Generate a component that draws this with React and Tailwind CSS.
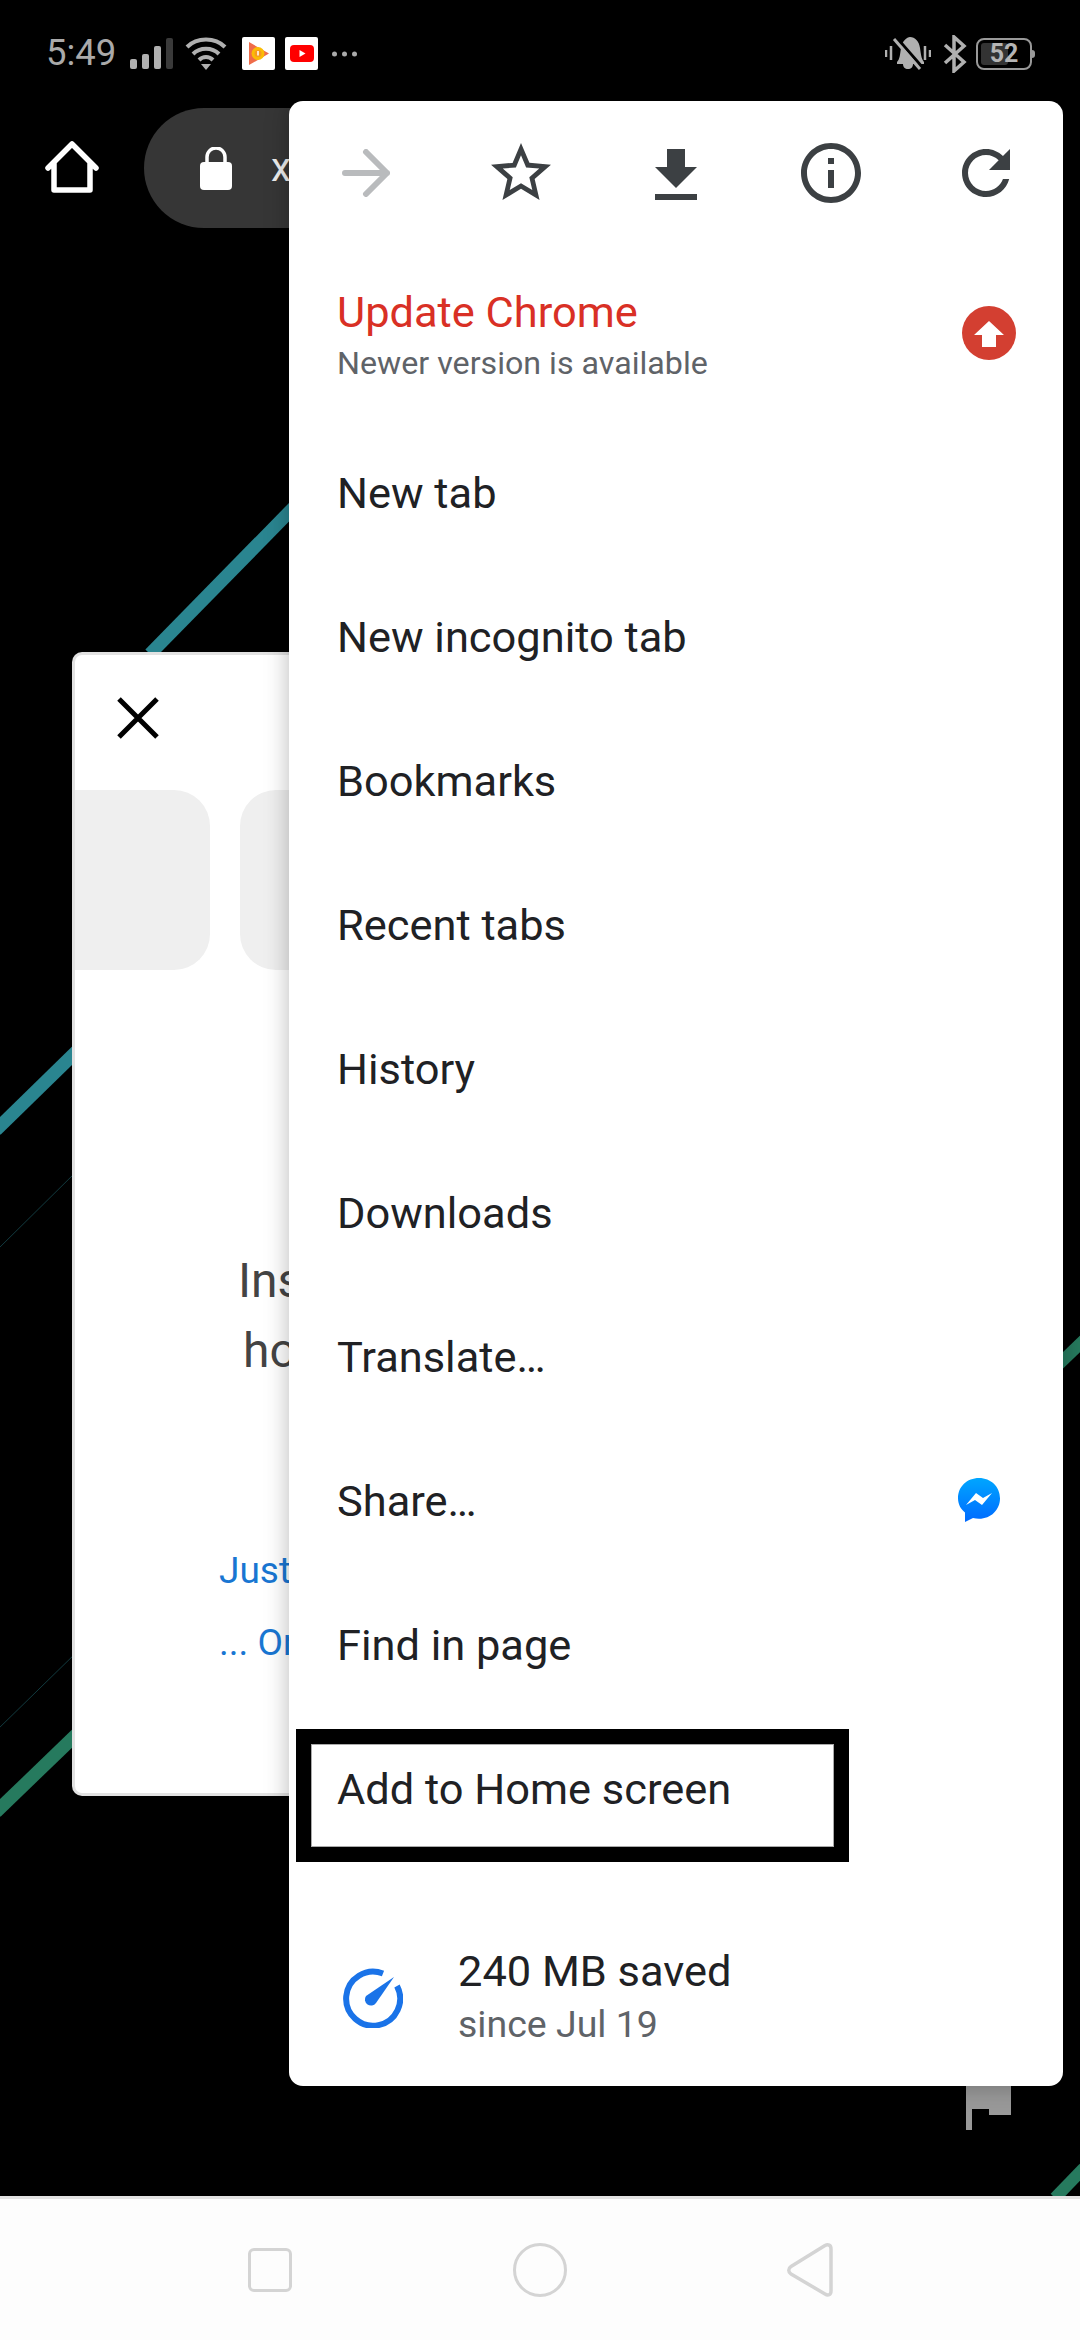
const menuItems = ['New tab', 'New incognito tab', 'Bookmarks', 'Recent tabs', 'History', 'Downloads', 'Translate…']

const ToolbarIcon = ({ d, className = 'fill-[#3c4043]' }) => (
  <div className="flex items-center justify-center">
    <svg viewBox="0 0 24 24" className={`h-[72px] w-[72px] ${className}`}>
      <path d={d} />
    </svg>
  </div>
)

const MenuRow = ({ label, children }) => (
  <div className="relative flex h-[144px] items-center justify-between pl-[48px]">
    <span className="pt-[3px] text-[43.4px] text-[#202124]">{label}</span>
    {children}
  </div>
)

const StatusBar = () => (
  <div className="flex h-[107px] items-center justify-between pr-[45px] pl-[46px] text-[#aaaaaa]">
    <div className="flex items-center">
      <span className="text-[36.5px] leading-none">5:49</span>
      <svg width="43" height="31" viewBox="0 0 43 31" className="ml-[14px]">
        <rect x="0" y="21" width="7" height="10" rx="2" fill="#b0b0b0" />
        <rect x="12" y="16" width="7" height="15" rx="2" fill="#b0b0b0" />
        <rect x="24" y="8" width="7" height="23" rx="2" fill="#b0b0b0" />
        <rect x="36" y="0" width="7" height="31" rx="2" fill="#3a3a3a" />
      </svg>
      <svg width="42" height="33" viewBox="0 0 42 33" className="ml-[12px]" fill="none" stroke="#b0b0b0" strokeWidth="4">
        <path d="M2 10C12 0 30 0 40 10" />
        <path d="M8 17C15 10 27 10 34 17" />
        <path d="M14 23C18 19 24 19 28 23" />
        <path d="M16 27h10l-5 6z" fill="#b0b0b0" stroke="none" />
      </svg>
      <div className="ml-[15px] flex h-[33px] w-[33px] items-center justify-center rounded-[2px] bg-white">
        <svg width="20" height="23" viewBox="0 0 20 23">
          <path d="M0 0L20 11.5 0 23z" fill="#ef6c4a" />
          <circle cx="9" cy="11.5" r="6.5" fill="#fbbc05" />
          <circle cx="9" cy="11.5" r="3.5" fill="#f79a1e" />
          <path d="M9 9v4.500" stroke="#fff" strokeWidth="1.500" />
        </svg>
      </div>
      <div className="ml-[10px] flex h-[33px] w-[33px] items-center justify-center rounded-[2px] bg-white">
        <svg width="24" height="17" viewBox="0 0 24 17">
          <rect width="24" height="17" rx="4" fill="#ff0000" />
          <path d="M9.5 5l6 3.5-6 3.500z" fill="#fff" />
        </svg>
      </div>
      <svg width="25" height="6" viewBox="0 0 25 6" className="ml-[14px]" fill="#aaaaaa">
        <circle cx="2.5" cy="3" r="2.5" />
        <circle cx="12.5" cy="3" r="2.5" />
        <circle cx="22.5" cy="3" r="2.5" />
      </svg>
    </div>
    <div className="flex items-center">
      <svg width="46" height="35" viewBox="0 0 46 35">
        <path d="M12 26c3-3 3-8 4-14 1-7 6-11 9-11 5 0 9 4 10 11 1 6 1 10 4 14v2H28c0 3-2 5-5 5s-5-2-5-5h-6z" fill="#b0b0b0" />
        <path d="M11 1l27 31" stroke="#000" strokeWidth="3" />
        <path d="M9 3l26 30" stroke="#b0b0b0" strokeWidth="3" />
        <path d="M1 14v7M6 10v14M40 10v14M45 14v7" stroke="#b0b0b0" strokeWidth="2.5" />
      </svg>
      <svg width="24" height="38" viewBox="0 0 24 38" className="ml-[12px]" fill="none" stroke="#b0b0b0" strokeWidth="3.5">
        <path d="M2 10L21 27 11 36V2l10 9L2 28" />
      </svg>
      <div className="ml-[9px] flex items-center">
        <div className="relative flex h-[32px] w-[56px] items-center justify-center rounded-[8px] border-[2.5px] border-[#999999] pb-px">
          <div className="absolute top-[3px] bottom-[3px] left-[3px] w-[27px] rounded-[3px] bg-[#333333]" />
          <span className="relative text-[25px] leading-none font-bold text-[#b4b4b4]">52</span>
        </div>
        <div className="h-[8px] w-[3px] rounded-r-full bg-[#999999]" />
      </div>
    </div>
  </div>
)

const Toolbar = () => (
  <div className="flex h-[122px] items-center pl-[45px]">
    <svg width="54" height="54" viewBox="0 0 54 54" fill="none" stroke="#fff" strokeWidth="5.5" strokeLinejoin="round" strokeLinecap="round">
      <path d="M3 27L27 3l24 24M9 22v27h36V22" />
    </svg>
    <div className="ml-[45px] flex h-[120px] w-[400px] items-center rounded-l-full bg-[#363636] pl-[56px]">
      <svg width="32" height="43" viewBox="0 0 32 43" fill="#fff">
        <path d="M7 17v-7a9 9 0 0 1 18 0v7" fill="none" stroke="#fff" strokeWidth="3.5" />
        <rect x="0" y="15" width="32" height="28" rx="4" />
      </svg>
      <span className="ml-[39px] text-[40px] text-[#eeeeee]">x</span>
    </div>
  </div>
)

const ModalBehind = () => (
  <div className="mt-[423px] ml-[72px] flex h-[1144px] w-[300px] flex-col overflow-hidden rounded-[10px] border-y-[3px] border-l-[3px] border-[#e2e2e2] bg-white">
    <svg width="42" height="42" viewBox="0 0 42 42" className="mt-[42px] ml-[42px] shrink-0" stroke="#000" strokeWidth="5">
      <path d="M2 2l38 38M40 2L2 40" />
    </svg>
    <div className="mt-[51px] -ml-[40px] flex h-[180px] shrink-0 gap-[30px]">
      <div className="w-[175px] shrink-0 rounded-[36px] bg-[#efefef]" />
      <div className="w-[200px] shrink-0 rounded-[36px] bg-[#efefef]" />
    </div>
    <div className="mt-[276px] pl-[163px] text-[48px] leading-[70px] text-[#444444]">
      <div>Ins</div>
      <div className="pl-[5px]">ho</div>
    </div>
    <div className="mt-[149px] pl-[144px] text-[37px] leading-[72px] text-[#1976d2]">
      <div>Just</div>
      <div>... Or</div>
    </div>
  </div>
)

const Menu = () => (
  <div className="absolute top-[101px] left-[289px] flex h-[1985px] w-[774px] flex-col rounded-[14px] bg-white shadow-[0_0_24px_rgba(0,0,0,0.28)]">
    <div className="grid h-[144px] grid-cols-5 items-center">
      <div className="flex items-center justify-center">
        <svg width="48" height="48" viewBox="0 0 48 48" fill="none" stroke="#b9bbbd" strokeWidth="6" strokeLinecap="round" strokeLinejoin="round">
          <path d="M3 24h42M24 3l21 21-21 21" />
        </svg>
      </div>
      <ToolbarIcon d="M22 9.24l-7.19-.62L12 2 9.19 8.63 2 9.24l5.46 4.73L5.82 21 12 17.27 18.18 21l-1.63-7.03L22 9.24zM12 15.4l-3.76 2.27 1-4.28-3.32-2.88 4.38-.38L12 6.1l1.71 4.04 4.38.38-3.32 2.88 1 4.28L12 15.4z" />
      <ToolbarIcon className="translate-y-[3px] fill-[#3c4043]" d="M19 9h-4V3H9v6H5l7 7 7-7zM5 18v2h14v-2H5z" />
      <ToolbarIcon d="M11 7h2v2h-2zm0 4h2v6h-2zm1-9C6.48 2 2 6.48 2 12s4.48 10 10 10 10-4.48 10-10S17.52 2 12 2zm0 18c-4.41 0-8-3.59-8-8s3.59-8 8-8 8 3.59 8 8-3.59 8-8 8z" />
      <ToolbarIcon d="M17.65 6.35C16.2 4.9 14.21 4 12 4c-4.42 0-7.99 3.58-7.99 8s3.57 8 7.99 8c3.73 0 6.84-2.55 7.73-6h-2.08c-.82 2.33-3.04 4-5.65 4-3.31 0-6-2.69-6-6s2.69-6 6-6c1.66 0 3.14.69 4.22 1.78L13 11h7V4l-2.35 2.35z" />
    </div>
    <div className="flex h-[175px] items-center justify-between pr-[47px] pl-[48px]">
      <div className="flex flex-col pt-[10px]">
        <span className="text-[43.4px] leading-[50px] text-[#d93025]">Update Chrome</span>
        <span className="text-[32.2px] leading-[50px] text-[#5f6368]">Newer version is available</span>
      </div>
      <svg width="54" height="54" viewBox="0 0 54 54">
        <circle cx="27" cy="27" r="27" fill="#d33f31" />
        <path d="M27 15l15 14H34v12H20V29h-8z" fill="#fff" />
      </svg>
    </div>
    {menuItems.map((item) => (
      <MenuRow key={item} label={item} />
    ))}
    <MenuRow label="Share…">
      <svg width="42" height="44" viewBox="0 0 42 44" className="mr-[63px]">
        <defs>
          <linearGradient id="messenger" x1="0" y1="0" x2="0" y2="1">
            <stop offset="0" stopColor="#00a6ff" />
            <stop offset="1" stopColor="#006aff" />
          </linearGradient>
        </defs>
        <path d="M21 0C9 0 0 8.700 0 20c0 6 2.500 11 7 14.500V44l8-4c2 .5 4 .8 6 .8 12 0 21-9 21-20.500S33 0 21 0z" fill="url(#messenger)" />
        <path d="M8 27l10-12 7 5 9-5-10 12-7-5z" fill="#fff" />
      </svg>
    </MenuRow>
    <MenuRow label="Find in page" />
    <MenuRow label="Add to Home screen">
      {/* annotation box drawn over the row */}
      <div className="absolute top-[13px] left-[7px] h-[133px] w-[553px] border-[15px] border-black outline outline-1 -outline-offset-[16px] outline-[#aaaaaa]" />
    </MenuRow>
    <div className="flex flex-1 items-center pt-[49px] pl-[54px]">
      <svg width="60" height="60" viewBox="0 0 60 60" fill="none">
        <path d="M40 5.500A27 27 0 1 0 54 18" stroke="#1a73e8" strokeWidth="6" />
        <path d="M51 9L33 35a6 6 0 0 1-10-7z" fill="#1a73e8" />
      </svg>
      <div className="ml-[55px] flex flex-col">
        <span className="text-[43.4px] leading-[52px] text-[#202124]">240 MB saved</span>
        <span className="text-[37.5px] leading-[52px] text-[#5f6368]">since Jul 19</span>
      </div>
    </div>
  </div>
)

const NavBar = () => (
  <div className="relative h-[144px] border-t-[3px] border-[#e2e2e2] bg-[#fdfdfd]">
    <div className="grid h-full grid-cols-[270px_270px_270px] pl-[135px]">
      <div className="flex items-center justify-center">
        <div className="h-[44px] w-[44px] rounded-[6px] border-[3.5px] border-[#d4d4d4]" />
      </div>
      <div className="flex items-center justify-center">
        <div className="h-[54px] w-[54px] rounded-full border-[3.5px] border-[#d4d4d4]" />
      </div>
      <div className="flex items-center justify-center">
        <svg width="46" height="54" viewBox="0 0 46 54" fill="none" stroke="#d4d4d4" strokeWidth="3.500" strokeLinejoin="round">
          <path d="M4 23.500L38 2.500C41 1 44 2 44 6v42c0 4-3 5-6 3L4 31c-3-2-3-5.500 0-7.500z" />
        </svg>
      </div>
    </div>
  </div>
)

export default function App() {
  return (
    <div className="relative flex h-[2340px] w-[1080px] flex-col overflow-hidden bg-black font-['Roboto',sans-serif]">
      {/* site background behind the dialog */}
      <svg className="absolute inset-0" width="1080" height="2340" viewBox="0 0 1080 2340" fill="none">
        <path d="M300 501L150 654" stroke="#2a8590" strokeWidth="13" />
        <path d="M-4 1130L80 1048" stroke="#2a8590" strokeWidth="13" />
        <path d="M-4 1251L80 1168" stroke="#123a3f" strokeWidth="1" />
        <path d="M-4 1731L80 1649" stroke="#123a3f" strokeWidth="1" />
        <path d="M-4 1812L80 1731" stroke="#267a5e" strokeWidth="13" />
        <path d="M1055 1368L1084 1340" stroke="#267a5e" strokeWidth="12" />
        <path d="M1055 2198L1084 2168" stroke="#267a5e" strokeWidth="12" />
        <path d="M966 2080h45v35h-22v-6h-17v21h-6z" fill="#999999" />
      </svg>
      <div className="relative flex h-full flex-col">
        <StatusBar />
        <Toolbar />
        <div className="h-[1967px] shrink-0 overflow-hidden">
          <ModalBehind />
        </div>
        <NavBar />
        <Menu />
      </div>
    </div>
  )
}
